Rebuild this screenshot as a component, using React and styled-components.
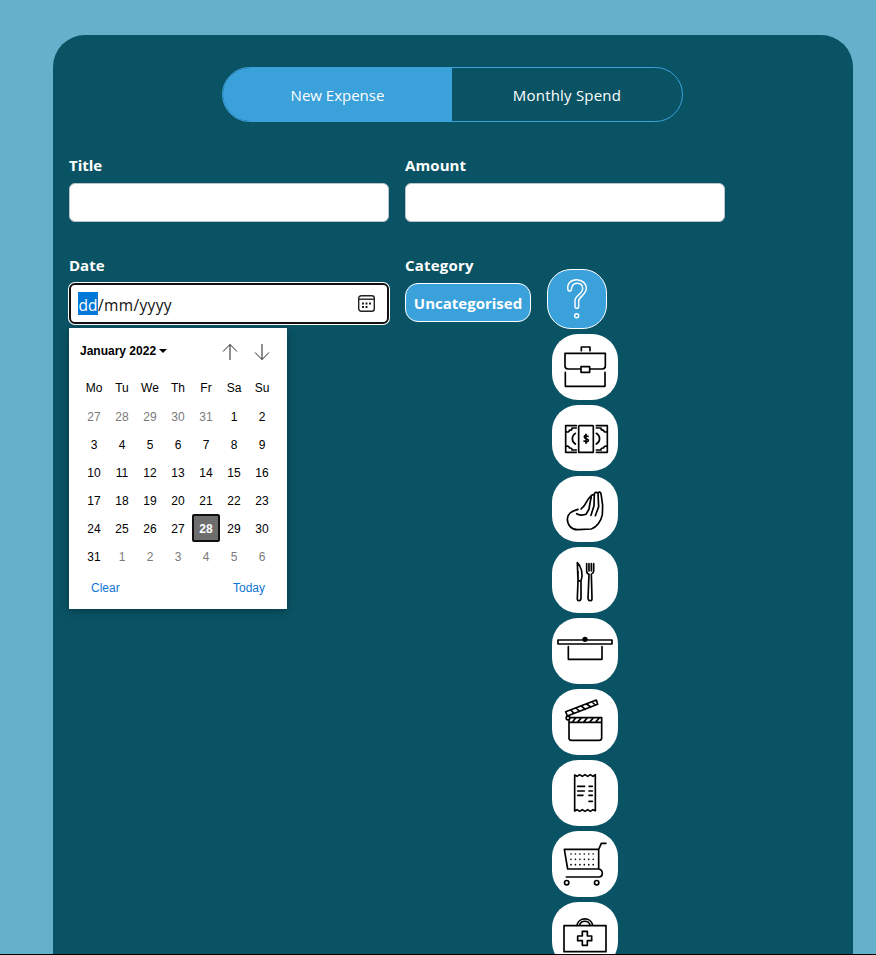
import React from "react";
import styled, { createGlobalStyle } from "styled-components";

const colors = {
  sky: "#66b0cc",
  panel: "#0a5364",
  accent: "#3aa1db",
  link: "#0f75d6",
};

const GlobalStyle = createGlobalStyle`
  *, *::before, *::after { box-sizing: border-box; }
  body {
    margin: 0;
    background: #000;
    font-family: "Open Sans", "Noto Sans", sans-serif;
    font-size: 16px;
    color: #fff;
  }
  button { font: inherit; color: inherit; padding: 0; }
`;

const Page = styled.div`
  height: 954px;
  overflow: hidden;
  background: ${colors.sky};
  padding: 35px 0 0 53px;
`;

const Panel = styled.main`
  width: 800px;
  min-height: 1200px;
  border-radius: 32px;
  background: ${colors.panel};
  padding: 32px 16px;
  display: flex;
  flex-direction: column;
`;

const Tabs = styled.div`
  width: 461px;
  height: 55px;
  margin-left: 153px;
  display: grid;
  grid-template-columns: 229px 1fr;
  border: 1px solid ${colors.accent};
  border-radius: 28px;
  overflow: hidden;
`;

const Tab = styled.button`
  border: 0;
  padding-top: 1px;
  font-size: 15px;
  letter-spacing: ${(p) => p.$spacing || "0"};
  background: ${(p) => (p.$active ? colors.accent : "transparent")};
`;

const Form = styled.form`
  display: grid;
  grid-template-columns: 320px 320px;
  grid-template-rows: 100px auto;
  column-gap: 16px;
  padding-top: 32px;
`;

const Field = styled.div`
  position: relative;
`;

const Label = styled.label`
  display: block;
  height: 29px;
  line-height: 23px;
  font-size: 15px;
  font-weight: 700;
  letter-spacing: ${(p) => p.$spacing || "0"};
`;

const TextInput = styled.input`
  display: block;
  width: 320px;
  height: 39px;
  border: 1px solid #b9c3c8;
  border-radius: 6px;
  background: #fff;
  outline: none;
`;

const DateInput = styled.div`
  width: 320px;
  height: 41px;
  border: 2px solid #101010;
  border-radius: 6px;
  box-shadow: 0 0 0 1px #fff;
  background: #fff;
  color: #1b1b1b;
  display: flex;
  align-items: center;
  justify-content: space-between;
  padding: 0 12px 0 7px;
`;

const DateText = styled.span`
  height: 24px;
  font-size: 15.5px;
  line-height: 26px;
  display: flex;
  color: #111;
`;

const Segment = styled.span`
  height: 23px;
  width: 20px;
  text-align: center;
  background: #0078d7;
  color: #fff;
`;

const DateRest = styled.span`
  letter-spacing: 0.35px;
`;

const Popup = styled.section`
  position: absolute;
  z-index: 2;
  top: 74px;
  left: 0;
  width: 218px;
  height: 281px;
  background: #fff;
  color: #000;
  box-shadow: 0 2px 8px rgba(0, 0, 0, 0.3);
  font-family: "Liberation Sans", Arial, sans-serif;
  font-size: 12px;
  padding: 0 11px;
`;

const PopupHeader = styled.header`
  height: 46px;
  display: flex;
  align-items: center;
  font-weight: 700;
`;

const MonthCaret = styled.span`
  margin: 0 auto 0 3px;
  border: 4px solid transparent;
  border-top-color: #000;
  border-bottom: 0;
`;

const ArrowIcon = styled.svg`
  width: 16px;
  height: 18px;
  margin: 2px 6px 0 10px;
  fill: none;
  stroke: #222;
  stroke-width: 1;
`;

const DayGrid = styled.div`
  display: grid;
  grid-template-columns: repeat(7, 28px);
  grid-template-rows: 28px repeat(6, 28px);
  text-align: center;
  line-height: 28px;
`;

const Day = styled.span`
  color: ${(p) => (p.$muted ? "#7a7a7a" : "#000")};
  padding-top: ${(p) => (p.$heading ? "0" : "1px")};
`;

const Today = styled(Day)`
  background: #6e6e6e;
  border: 2px solid #101010;
  border-radius: 2px;
  color: #fff;
  font-weight: 700;
  line-height: 25px;
`;

const PopupFooter = styled.footer`
  display: flex;
  justify-content: space-between;
  padding: 11px 11px 0;
  color: ${colors.link};
  line-height: 14px;
`;

const CategoryRow = styled.div`
  display: flex;
  align-items: flex-start;
  gap: 16px;
`;

const CategoryPill = styled.div`
  width: 126px;
  height: 39px;
  border: 1px solid #fff;
  border-radius: 13px;
  background: ${colors.accent};
  font-weight: 700;
  font-size: 15px;
  line-height: 39px;
  text-align: center;
  white-space: nowrap;
`;

const CategoryList = styled.div`
  display: flex;
  flex-direction: column;
  gap: 5px;
  margin-top: -14px;
`;

const SelectedCategory = styled.button`
  width: 60px;
  height: 60px;
  border: 1px solid #fff;
  border-radius: 24px;
  background: ${colors.accent};
  display: flex;
`;

const CategoryTile = styled.button`
  width: 66px;
  height: 66px;
  margin-left: 5px;
  border: 0;
  border-radius: 26px;
  background: #fff;
  display: flex;
`;

const Glyph = styled.svg`
  width: 100%;
  height: 100%;
  fill: none;
  stroke: ${(p) => p.$color || "#000"};
  stroke-width: ${(p) => p.$weight || 5};
  stroke-linecap: round;
  stroke-linejoin: round;
`;

const QuestionIcon = () => (
  <Glyph viewBox="24 30 174 174" $color="#fff" $weight={4.4}>
    <path d="M84 90 C80 72 92 59 110 59 C128 59 139 72 139 85 C139 105 116 110 116 123 V140 Q116 145 110 145 Q105 145 105 140 V121 C105 107 128 101 128 86 C128 76 121 70 111 70 C99 70 95 79 94 90 Q89 97 84 90Z" />
    <circle cx="110" cy="167" r="6" />
  </Glyph>
);

const BriefcaseIcon = () => (
  <Glyph viewBox="36 222 198 198">
    <path d="M124 272 V261 H150 V272 M120 327 H84 Q75 327 75 318 V280 H196 V318 Q196 327 187 327 H152 M123 320 H149 V337 H123Z M76 337 V379 H195 V337" />
  </Glyph>
);

const MoneyIcon = () => (
  <Glyph viewBox="36 15 198 198">
    <path d="M109 77 H77 V157 H109 M79 95 Q88 98 88 91 Q97 91 96 84 H109 M79 139 Q88 137 88 144 Q97 143 96 150 H109 M169 77 H202 V157 H169 M200 95 Q191 98 191 91 Q182 91 183 84 H169 M200 139 Q191 137 191 144 Q182 143 183 150 H169" />
    <path d="M106 100 C94 108 94 124 106 132 M169 100 C182 108 182 124 169 132" />
    <rect x="116" y="77" width="44" height="80" rx="2" />
    <path d="M144 109 Q133 104 133 111 C133 117 145 115 145 121 Q144 128 132 123 M138 103 V130" />
  </Glyph>
);

const HandIcon = () => (
  <Glyph viewBox="36 228 198 198">
    <path d="M114 328 C101 331 82 337 82 357 C82 374 94 390 114 389 L154 387 C168 383 183 366 187 344 L188 316 L183 281 Q179 273 174 279 L175 300 L176 320 L166 347 M110 341 C119 346 130 346 138 343 L147 327 L150 309 L154 290 M162 283 Q154 284 149 292 C141 299 138 312 131 319 L123 327 M174 279 Q166 274 163 282 L162 317 L153 346" />
  </Glyph>
);

const CutleryIcon = () => (
  <Glyph viewBox="36 12 198 198">
    <path d="M112 59 C123 69 131 92 123 114 V166 Q122 173 117 173 Q111 173 112 166 L114 114Z M114 85 V113 L121 114 M140 62 V84 Q140 92 147 94 L144 167 Q145 173 150 173 Q156 173 156 167 L154 94 Q161 91 161 84 V62 M147 62 V84 M154 62 V84" />
  </Glyph>
);

const GraduationIcon = () => (
  <Glyph viewBox="36 225 198 198">
    <path d="M54 291 H216 V303 H54Z M85 311 V349 H186 V311" />
    <circle cx="135" cy="289" r="5.5" fill="#000" />
  </Glyph>
);

const ClapperIcon = () => (
  <Glyph viewBox="36 12 198 198">
    <path d="M77 80 L169 45 L173 58 L82 93Z M92 75 L102 85 M108 69 L119 79 M124 63 L136 73 M140 57 L152 66 M156 51 L166 60" />
    <circle cx="84" cy="99" r="5.5" />
    <path d="M91 98 H185 V158 Q185 166 177 166 H94 Q87 166 87 159 V107 M88 112 H185 M99 109 L107 99 M114 110 L124 99 M132 110 L142 99 M150 110 L160 99 M168 110 L178 99" />
  </Glyph>
);

const ReceiptIcon = () => (
  <Glyph viewBox="36 225 198 198">
    <path d="M104 270 L111 274 L119 269 L127 274 L135 269 L143 274 L151 269 L159 274 L166 269 V377 L159 374 L151 379 L143 374 L135 379 L127 374 L119 379 L111 374 L104 378Z M113 304 H134 M147 304 H157 M113 318 H133 M147 318 H157 M113 331 H129 M147 331 H157 M147 349 H157" />
  </Glyph>
);

const CartIcon = () => (
  <Glyph viewBox="36 18 198 198">
    <path d="M198 55 H184 L176 73 H73 L83 132 H176 V73 M176 132 Q187 134 187 145 Q187 156 176 156 H79" />
    <circle cx="80" cy="173" r="6.5" />
    <circle cx="170" cy="173" r="6.5" />
    <path d="M93 87 H165 M93 103 H165 M93 119 H165" strokeDasharray="0.1 13.2" />
  </Glyph>
);

const MedicalIcon = () => (
  <Glyph viewBox="36 231 198 198">
    <path d="M72 302 H198 V380 H72Z M111 300 A24 23 0 0 1 158 300 M119 300 A16 15 0 0 1 150 300 M127 319 H142 V333 H155 V347 H142 V361 H127 V347 H113 V333 H127Z" />
  </Glyph>
);

const categories = [
  ["Work", BriefcaseIcon],
  ["Cash", MoneyIcon],
  ["Charity", HandIcon],
  ["Food", CutleryIcon],
  ["Education", GraduationIcon],
  ["Entertainment", ClapperIcon],
  ["Bills", ReceiptIcon],
  ["Shopping", CartIcon],
  ["Health", MedicalIcon],
];

const weekdays = ["Mo", "Tu", "We", "Th", "Fr", "Sa", "Su"];

// Five days lead in from December and six trail into February.
const days = Array.from({ length: 42 }, (_, i) => {
  if (i < 5) return { n: 27 + i, muted: true };
  if (i < 36) return { n: i - 4, muted: false };
  return { n: i - 35, muted: true };
});

function DatePicker() {
  return (
    <Popup>
      <PopupHeader>
        January 2022
        <MonthCaret />
        <ArrowIcon viewBox="0 0 16 18">
          <path d="M8 17 V1.5 M1 8.5 L8 1.5 L15 8.5" />
        </ArrowIcon>
        <ArrowIcon viewBox="0 0 16 18">
          <path d="M8 1 V16.5 M1 9.5 L8 16.5 L15 9.5" />
        </ArrowIcon>
      </PopupHeader>
      <DayGrid>
        {weekdays.map((d) => (
          <Day key={d} $heading>{d}</Day>
        ))}
        {days.map(({ n, muted }, i) =>
          n === 28 && !muted ? (
            <Today key={i}>{n}</Today>
          ) : (
            <Day key={i} $muted={muted}>{n}</Day>
          )
        )}
      </DayGrid>
      <PopupFooter>
        <span>Clear</span>
        <span>Today</span>
      </PopupFooter>
    </Popup>
  );
}

const CalendarIcon = () => (
  <svg width="17" height="17" viewBox="0 0 17 17" fill="none" stroke="#222" strokeWidth="1.4">
    <rect x="0.7" y="0.7" width="15.6" height="15.6" rx="2.5" />
    <path d="M0.7 4.2 H16.3" />
    <path d="M4 8.5 H6 M7.5 8.5 H9.5 M11 8.5 H13 M4 12 H6 M7.5 12 H9.5" strokeWidth="2" />
  </svg>
);

export default function App() {
  return (
    <>
      <GlobalStyle />
      <Page>
        <Panel>
          <Tabs>
            <Tab $active>New Expense</Tab>
            <Tab $spacing="0.2px">Monthly Spend</Tab>
          </Tabs>
          <Form onSubmit={(e) => e.preventDefault()}>
            <Field>
              <Label>Title</Label>
              <TextInput />
            </Field>
            <Field>
              <Label $spacing="0.1px">Amount</Label>
              <TextInput />
            </Field>
            <Field>
              <Label>Date</Label>
              <DateInput>
                <DateText>
                  <Segment>dd</Segment>
                  <DateRest>/mm/yyyy</DateRest>
                </DateText>
                <CalendarIcon />
              </DateInput>
              <DatePicker />
            </Field>
            <Field>
              <Label $spacing="0.2px">Category</Label>
              <CategoryRow>
                <CategoryPill>Uncategorised</CategoryPill>
                <CategoryList>
                  <SelectedCategory type="button">
                    <QuestionIcon />
                  </SelectedCategory>
                  {categories.map(([name, Icon]) => (
                    <CategoryTile key={name} type="button">
                      <Icon />
                    </CategoryTile>
                  ))}
                </CategoryList>
              </CategoryRow>
            </Field>
          </Form>
        </Panel>
      </Page>
    </>
  );
}
